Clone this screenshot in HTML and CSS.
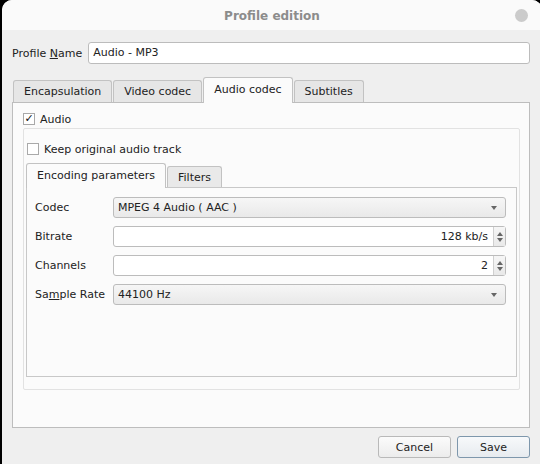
FILE: index.html
```html
<!DOCTYPE html>
<html lang="en">
<head>
    <meta charset="UTF-8">
    <title>Profile edition</title>
    <link rel="stylesheet" href="styles.css">
</head>
<body>

    <div class="window">
        <div class="titlebar">
            <span></span>
            <span class="title">Profile edition</span>
            <span class="close"></span>
        </div>

        <div class="content">
            <div class="name-row">
                <label>Profile <u>N</u>ame</label>
                <div class="text-input">Audio - MP3</div>
            </div>

            <div class="tabs">
                <div class="tab">Encapsulation</div>
                <div class="tab">Video codec</div>
                <div class="tab active">Audio codec</div>
                <div class="tab">Subtitles</div>
            </div>

            <div class="pane">
                <div class="check-row">
                    <span class="checkbox checked">&#10003;</span>
                    <span>Audio</span>
                </div>

                <div class="group">
                    <div class="check-row keep">
                        <span class="checkbox"></span>
                        <span>Keep original audio track</span>
                    </div>

                    <div class="tabs inner">
                        <div class="tab active">Encoding parameters</div>
                        <div class="tab">Filters</div>
                    </div>

                    <div class="inner-pane">
                        <div class="form-row">
                            <label>Codec</label>
                            <div class="combo">MPEG 4 Audio ( AAC )<span class="arrow"></span></div>
                        </div>
                        <div class="form-row">
                            <label>Bitrate</label>
                            <div class="spin">
                                <span class="value">128 kb/s</span>
                                <span class="spin-btns"><i class="up"></i><i class="down"></i></span>
                            </div>
                        </div>
                        <div class="form-row">
                            <label>Channels</label>
                            <div class="spin">
                                <span class="value">2</span>
                                <span class="spin-btns"><i class="up"></i><i class="down"></i></span>
                            </div>
                        </div>
                        <div class="form-row">
                            <label>Sa<u>m</u>ple Rate</label>
                            <div class="combo">44100 Hz<span class="arrow"></span></div>
                        </div>
                    </div>
                </div>
            </div>

            <div class="buttons">
                <button type="button">Cancel</button>
                <button type="button" class="default">Save</button>
            </div>
        </div>
    </div>

</body>
</html>
```

FILE: styles.css
```css
* {
    margin: 0;
    padding: 0;
    box-sizing: border-box;
}

body {
    background-color: #000;
    font-family: 'DejaVu Sans', sans-serif;
    font-size: 11px;
    color: #222;
    overflow: hidden;
    height: 464px;
}

.window {
    margin-left: 2px;
    width: 540px;
    height: 470px;
    background-color: #efefef;
    border-radius: 10px 10px 0 0;
    overflow: hidden;
}

/* Title bar */
.titlebar {
    height: 30px;
    padding-top: 1px;
    background-color: #fafafa;
    display: grid;
    grid-template-columns: 1fr auto 1fr;
    align-items: center;
}

.title {
    font-weight: bold;
    font-size: 12px;
    color: #8c8c8c;
}

.close {
    justify-self: end;
    width: 13px;
    height: 13px;
    border-radius: 50%;
    background-color: #cbcbcb;
    margin-right: 14px;
}

.content {
    padding: 12px 12px 0 10px;
}

/* Profile name */
.name-row {
    display: flex;
    align-items: center;
    gap: 6px;
    height: 22px;
}

.text-input {
    flex: 1;
    height: 22px;
    line-height: 20px;
    padding-left: 4px;
    background-color: #fff;
    border: 1px solid #bcbcbc;
    border-radius: 3px;
}

/* Tabs */
.tabs {
    display: flex;
    align-items: flex-end;
    margin-top: 13px;
    padding-left: 1px;
    gap: 1px;
    position: relative;
    z-index: 1;
}

.tab {
    height: 22px;
    line-height: 21px;
    padding: 0 10px;
    background-color: #e6e6e6;
    border: 1px solid #c2c2c2;
    border-bottom: none;
    border-radius: 3px 3px 0 0;
    color: #222;
}

.tab.active {
    height: 26px;
    line-height: 24px;
    background-color: #fbfbfb;
    margin-bottom: -1px;
}

.pane {
    height: 326px;
    background-color: #fbfbfb;
    border: 1px solid #bdbdbd;
    padding: 10px 9px 0 10px;
}

.check-row {
    display: flex;
    align-items: center;
    gap: 5px;
    height: 12px;
}

.checkbox {
    width: 12px;
    height: 12px;
    border: 1px solid #a9a9a9;
    background-color: #fff;
    font-size: 11px;
    line-height: 10px;
    text-align: center;
    color: #111;
    font-weight: bold;
}

.group {
    margin-top: 3px;
    height: 262px;
    border: 1px solid #e2e2e2;
    border-radius: 2px;
    padding: 14px 2px 0 2px;
}

.check-row.keep {
    padding-left: 1px;
}

.tabs.inner {
    margin-top: 8px;
    padding-left: 0;
}

.tabs.inner .tab {
    height: 21px;
    background-color: #e9e9e9;
}

.tabs.inner .tab.active {
    height: 25px;
    background-color: #fbfbfb;
}

.inner-pane {
    height: 190px;
    background-color: #fbfbfb;
    border: 1px solid #c8c8c8;
    padding: 9px 10px 0 8px;
    display: flex;
    flex-direction: column;
    gap: 8px;
}

.form-row {
    display: flex;
    align-items: center;
    height: 21px;
}

.form-row label {
    width: 78px;
}

.combo {
    flex: 1;
    height: 21px;
    line-height: 19px;
    padding-left: 4px;
    border: 1px solid #bcbcbc;
    border-radius: 3px;
    background: linear-gradient(#f6f6f6, #e9e9e9);
    position: relative;
}

.arrow {
    position: absolute;
    right: 8px;
    top: 8px;
    border-left: 3px solid transparent;
    border-right: 3px solid transparent;
    border-top: 4px solid #666;
}

.spin {
    flex: 1;
    height: 21px;
    display: flex;
    border: 1px solid #bcbcbc;
    border-radius: 3px;
    background-color: #fff;
}

.spin .value {
    flex: 1;
    text-align: right;
    line-height: 19px;
    padding-right: 5px;
}

.spin-btns {
    width: 12px;
    border-left: 1px solid #d0d0d0;
    background: linear-gradient(#f6f6f6, #e9e9e9);
    display: flex;
    flex-direction: column;
    align-items: center;
    justify-content: center;
    gap: 2px;
}

.spin-btns i {
    border-left: 3px solid transparent;
    border-right: 3px solid transparent;
}

.spin-btns .up {
    border-bottom: 4px solid #666;
}

.spin-btns .down {
    border-top: 4px solid #666;
}

/* Dialog buttons */
.buttons {
    display: flex;
    justify-content: flex-end;
    gap: 6px;
    margin-top: 8px;
}

button {
    width: 73px;
    height: 22px;
    font-family: 'DejaVu Sans', sans-serif;
    font-size: 11px;
    color: #222;
    background: linear-gradient(#fbfbfb, #ececec);
    border: 1px solid #b9b9b9;
    border-radius: 3px;
}

button.default {
    border-color: #7e97ac;
    background: linear-gradient(#f7f9fb, #e7ebef);
}
```
